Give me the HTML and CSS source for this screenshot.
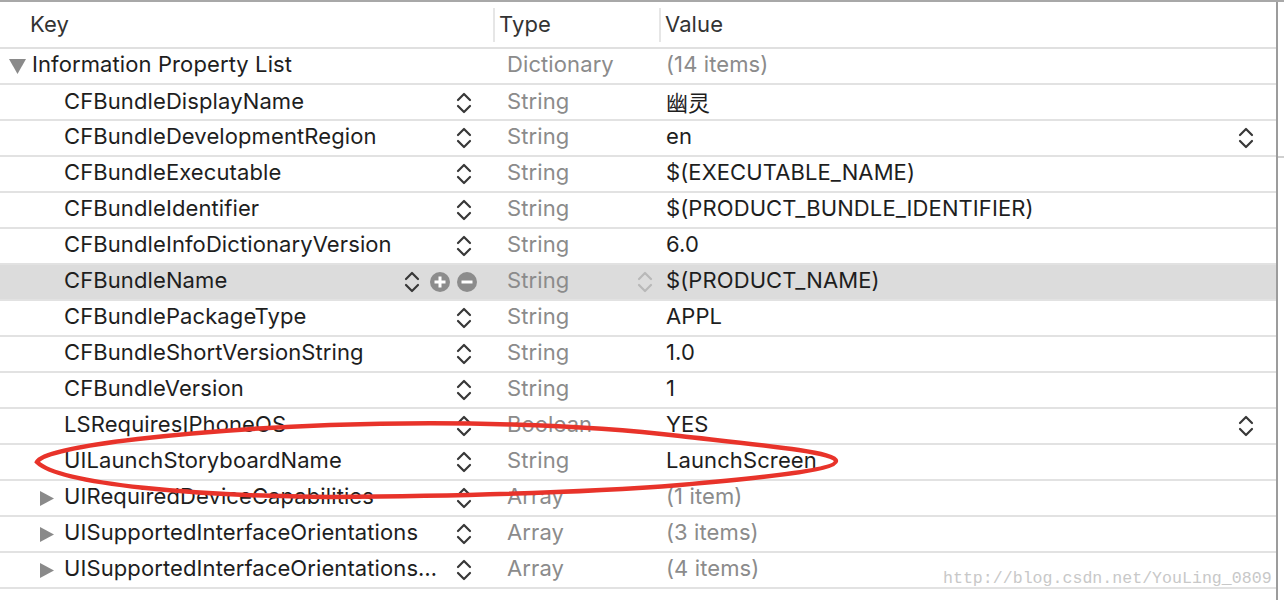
FILE: index.html
```html
<!DOCTYPE html>
<html>
<head>
<meta charset="utf-8">
<link rel="stylesheet" href="styles.css">
</head>
<body>
<div class="window">
  <div class="table">
    <div class="row header">
      <div class="hcell hkey">Key</div>
      <div class="hcell hsep">Type</div>
      <div class="hcell hsep">Value</div>
    </div>

    <div class="row">
      <div class="key root"><span class="disc"><svg width="17" height="15" viewBox="0 0 17 15"><polygon points="0,0 17,0 8.5,15" fill="#8a8a8a"/></svg></span><span class="ktext">Information Property List</span></div>
      <div class="type"><span class="ttext">Dictionary</span></div>
      <div class="value dim"><span class="vtext">(14 items)</span></div>
    </div>

    <div class="row">
      <div class="key"><span class="disc"></span><span class="ktext">CFBundleDisplayName</span><svg class="step" width="16" height="24" viewBox="0 0 16 24"><polyline points="2,9 8,3 14,9"/><polyline points="2,15 8,21 14,15"/></svg></div>
      <div class="type"><span class="ttext">String</span></div>
      <div class="value"><span class="vtext cjk">幽灵</span></div>
    </div>

    <div class="row">
      <div class="key"><span class="disc"></span><span class="ktext">CFBundleDevelopmentRegion</span><svg class="step" width="16" height="24" viewBox="0 0 16 24"><polyline points="2,9 8,3 14,9"/><polyline points="2,15 8,21 14,15"/></svg></div>
      <div class="type"><span class="ttext">String</span></div>
      <div class="value"><span class="vtext">en</span><svg class="step" width="16" height="24" viewBox="0 0 16 24"><polyline points="2,9 8,3 14,9"/><polyline points="2,15 8,21 14,15"/></svg></div>
    </div>

    <div class="row">
      <div class="key"><span class="disc"></span><span class="ktext">CFBundleExecutable</span><svg class="step" width="16" height="24" viewBox="0 0 16 24"><polyline points="2,9 8,3 14,9"/><polyline points="2,15 8,21 14,15"/></svg></div>
      <div class="type"><span class="ttext">String</span></div>
      <div class="value"><span class="vtext">$(EXECUTABLE_NAME)</span></div>
    </div>

    <div class="row">
      <div class="key"><span class="disc"></span><span class="ktext">CFBundleIdentifier</span><svg class="step" width="16" height="24" viewBox="0 0 16 24"><polyline points="2,9 8,3 14,9"/><polyline points="2,15 8,21 14,15"/></svg></div>
      <div class="type"><span class="ttext">String</span></div>
      <div class="value"><span class="vtext">$(PRODUCT_BUNDLE_IDENTIFIER)</span></div>
    </div>

    <div class="row">
      <div class="key"><span class="disc"></span><span class="ktext">CFBundleInfoDictionaryVersion</span><svg class="step" width="16" height="24" viewBox="0 0 16 24"><polyline points="2,9 8,3 14,9"/><polyline points="2,15 8,21 14,15"/></svg></div>
      <div class="type"><span class="ttext">String</span></div>
      <div class="value"><span class="vtext">6.0</span></div>
    </div>

    <div class="row selected">
      <div class="key"><span class="disc"></span><span class="ktext">CFBundleName</span>
        <svg class="step" width="16" height="24" viewBox="0 0 16 24"><polyline points="2,9 8,3 14,9"/><polyline points="2,15 8,21 14,15"/></svg>
        <svg class="btn plus" width="20" height="20" viewBox="0 0 20 20"><circle cx="10" cy="10" r="10" fill="#8c8c8c"/><path d="M10 4.5V15.5M4.5 10H15.5" stroke="#fff" stroke-width="3"/></svg>
        <svg class="btn" width="20" height="20" viewBox="0 0 20 20"><circle cx="10" cy="10" r="10" fill="#8c8c8c"/><path d="M4.5 10H15.5" stroke="#fff" stroke-width="3"/></svg>
      </div>
      <div class="type"><span class="ttext">String</span><svg class="step light" width="16" height="24" viewBox="0 0 16 24"><polyline points="2,9 8,3 14,9"/><polyline points="2,15 8,21 14,15"/></svg></div>
      <div class="value"><span class="vtext">$(PRODUCT_NAME)</span></div>
    </div>

    <div class="row">
      <div class="key"><span class="disc"></span><span class="ktext">CFBundlePackageType</span><svg class="step" width="16" height="24" viewBox="0 0 16 24"><polyline points="2,9 8,3 14,9"/><polyline points="2,15 8,21 14,15"/></svg></div>
      <div class="type"><span class="ttext">String</span></div>
      <div class="value"><span class="vtext">APPL</span></div>
    </div>

    <div class="row">
      <div class="key"><span class="disc"></span><span class="ktext">CFBundleShortVersionString</span><svg class="step" width="16" height="24" viewBox="0 0 16 24"><polyline points="2,9 8,3 14,9"/><polyline points="2,15 8,21 14,15"/></svg></div>
      <div class="type"><span class="ttext">String</span></div>
      <div class="value"><span class="vtext">1.0</span></div>
    </div>

    <div class="row">
      <div class="key"><span class="disc"></span><span class="ktext">CFBundleVersion</span><svg class="step" width="16" height="24" viewBox="0 0 16 24"><polyline points="2,9 8,3 14,9"/><polyline points="2,15 8,21 14,15"/></svg></div>
      <div class="type"><span class="ttext">String</span></div>
      <div class="value"><span class="vtext">1</span></div>
    </div>

    <div class="row">
      <div class="key"><span class="disc"></span><span class="ktext">LSRequiresIPhoneOS</span><svg class="step" width="16" height="24" viewBox="0 0 16 24"><polyline points="2,9 8,3 14,9"/><polyline points="2,15 8,21 14,15"/></svg></div>
      <div class="type"><span class="ttext">Boolean</span></div>
      <div class="value"><span class="vtext">YES</span><svg class="step" width="16" height="24" viewBox="0 0 16 24"><polyline points="2,9 8,3 14,9"/><polyline points="2,15 8,21 14,15"/></svg></div>
    </div>

    <div class="row">
      <div class="key"><span class="disc"></span><span class="ktext">UILaunchStoryboardName</span><svg class="step" width="16" height="24" viewBox="0 0 16 24"><polyline points="2,9 8,3 14,9"/><polyline points="2,15 8,21 14,15"/></svg></div>
      <div class="type"><span class="ttext">String</span></div>
      <div class="value"><span class="vtext">LaunchScreen</span></div>
    </div>

    <div class="row">
      <div class="key"><span class="disc"><svg width="14" height="15" viewBox="0 0 14 15"><polygon points="0,0 14,7.5 0,15" fill="#8a8a8a"/></svg></span><span class="ktext">UIRequiredDeviceCapabilities</span><svg class="step" width="16" height="24" viewBox="0 0 16 24"><polyline points="2,9 8,3 14,9"/><polyline points="2,15 8,21 14,15"/></svg></div>
      <div class="type"><span class="ttext">Array</span></div>
      <div class="value dim"><span class="vtext">(1 item)</span></div>
    </div>

    <div class="row">
      <div class="key"><span class="disc"><svg width="14" height="15" viewBox="0 0 14 15"><polygon points="0,0 14,7.5 0,15" fill="#8a8a8a"/></svg></span><span class="ktext">UISupportedInterfaceOrientations</span><svg class="step" width="16" height="24" viewBox="0 0 16 24"><polyline points="2,9 8,3 14,9"/><polyline points="2,15 8,21 14,15"/></svg></div>
      <div class="type"><span class="ttext">Array</span></div>
      <div class="value dim"><span class="vtext">(3 items)</span></div>
    </div>

    <div class="row">
      <div class="key"><span class="disc"><svg width="14" height="15" viewBox="0 0 14 15"><polygon points="0,0 14,7.5 0,15" fill="#8a8a8a"/></svg></span><span class="ktext">UISupportedInterfaceOrientations…</span><svg class="step" width="16" height="24" viewBox="0 0 16 24"><polyline points="2,9 8,3 14,9"/><polyline points="2,15 8,21 14,15"/></svg></div>
      <div class="type"><span class="ttext">Array</span></div>
      <div class="value dim"><span class="vtext">(4 items)</span></div>
    </div>
  </div>
  <div class="side"><div class="side-top"></div></div>

  <svg class="annot" width="1284" height="600" viewBox="0 0 1284 600">
    <path d="M37,462 C45,445 200,430 330,425 C450,421 580,424 680,436 C760,445 836,452 836,461 C836,470 760,478 680,485 C580,493 460,496 330,497 C200,496 60,485 37,462 Z" fill="none" stroke="#e8332a" stroke-width="4.5"/>
  </svg>
  <div class="watermark">http://blog.csdn.net/YouLing_0809</div>
</div>
</body>
</html>
```

FILE: styles.css
```css
html, body {
  margin: 0;
  padding: 0;
  background: #fff;
}
body {
  font-family: Inter, "Noto Sans", "Noto Sans CJK SC", sans-serif;
  font-size: 22px;
  letter-spacing: 0.1px;
  color: #1e1e1e;
}
.window {
  position: relative;
  width: 1284px;
  height: 600px;
  box-sizing: border-box;
  border-top: 2px solid #a8a8a8;
  display: flex;
  overflow: hidden;
}
.table {
  width: 1276px;
  flex: none;
}
.side {
  flex: 1;
  border-left: 2px solid #9c9c9c;
  background: #fff;
}
.side-top {
  height: 154px;
  border-bottom: 2px solid #cfcfcf;
}
.row {
  display: grid;
  grid-template-columns: 493px 166px 1fr;
  height: 36px;
  box-sizing: border-box;
  border-bottom: 2px solid #e2e2e2;
  align-items: center;
}
.row.header {
  height: 47px;
  border-bottom: 2px solid #e0e0e0;
  color: #333;
}
.hcell {
  height: 34px;
  display: flex;
  align-items: center;
  padding-bottom: 2px;
  box-sizing: border-box;
}
.hkey {
  padding-left: 30px;
}
.hsep {
  border-left: 2px solid #e6e6e6;
  padding-left: 4px;
}
.key {
  display: flex;
  align-items: center;
  padding-left: 40px;
  padding-right: 21px;
  height: 100%;
  min-width: 0;
}
.key.root {
  padding-left: 9px;
}
.disc {
  width: 24px;
  flex: none;
  display: flex;
  align-items: center;
}
.root .disc {
  width: 23px;
}
.ktext, .ttext, .vtext {
  white-space: nowrap;
  flex: 1;
  padding-bottom: 4px;
}
.step {
  flex: none;
  fill: none;
  stroke: #383838;
  stroke-width: 2.2;
  stroke-linecap: round;
  stroke-linejoin: round;
}
.step.light {
  stroke: #b8b8b8;
}
.btn {
  flex: none;
  margin-left: 7px;
}
.btn.plus {
  margin-left: 10px;
}
.selected {
  background: #dcdcdc;
}
.selected .key {
  padding-right: 16px;
}
.type {
  color: #8b8b8b;
  padding-left: 14px;
  display: flex;
  align-items: center;
  padding-right: 6px;
  height: 100%;
}
.value {
  padding-left: 7px;
  padding-right: 22px;
  display: flex;
  align-items: center;
  height: 100%;
}
.value.dim {
  color: #8b8b8b;
}
.cjk {
  font-family: "Noto Sans CJK SC", sans-serif;
}
.annot {
  position: absolute;
  left: 0;
  top: -2px;
  pointer-events: none;
}
.watermark {
  position: absolute;
  left: 943px;
  top: 567px;
  font-family: "Liberation Mono", monospace;
  font-size: 16.6px;
  letter-spacing: 0;
  line-height: 20px;
  color: #c8c8c8;
  white-space: nowrap;
}
```
